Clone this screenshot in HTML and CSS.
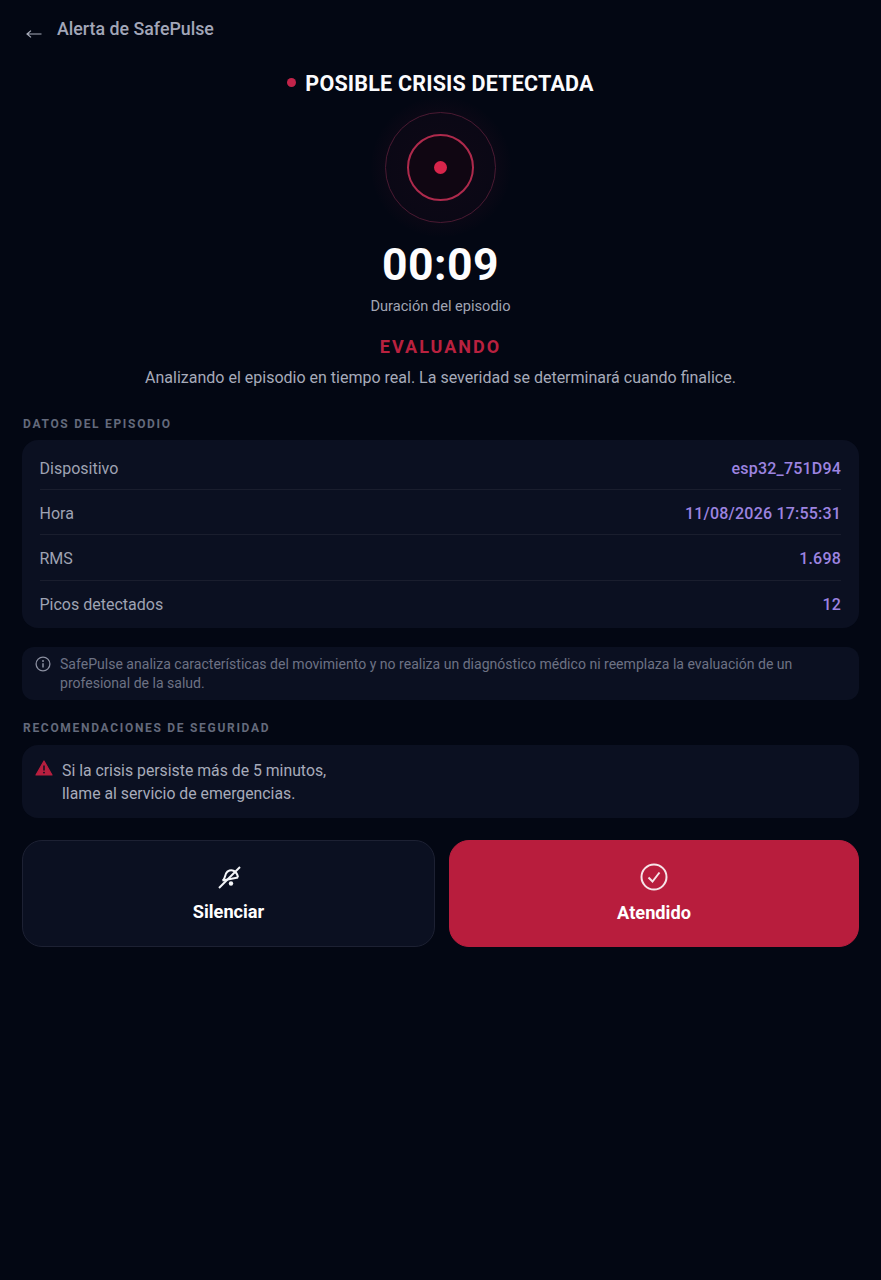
FILE: index.html
```html
<!DOCTYPE html>
<html lang="es">
<head>
<meta charset="utf-8">
<title>Alerta de SafePulse</title>
<link rel="stylesheet" href="styles.css">
</head>
<body>
<main class="page">
  <header class="topbar">
    <svg class="back" viewBox="0 0 16 10" width="16" height="10"><path d="M15.500 5H1M5 1.600 1 5l4 3.400" fill="none" stroke="#a9adbb" stroke-width="1.200"/></svg>
    <span class="topbar-title">Alerta de SafePulse</span>
  </header>
  <section class="hero">
    <h1 class="crisis"><span class="crisis-dot"></span>POSIBLE CRISIS DETECTADA</h1>
    <div class="pulse"><div class="ring-outer"><div class="ring-inner"><div class="core"></div></div></div></div>
    <div class="timer">00:09</div>
    <div class="timer-label">Duración del episodio</div>
    <div class="status">EVALUANDO</div>
    <p class="status-text">Analizando el episodio en tiempo real. La severidad se determinará cuando finalice.</p>
  </section>
  <h2 class="section-label first">DATOS DEL EPISODIO</h2>
  <section class="card data">
    <div class="row"><span>Dispositivo</span><b>esp32_751D94</b></div>
    <div class="row"><span>Hora</span><b>11/08/2026 17:55:31</b></div>
    <div class="row"><span>RMS</span><b>1.698</b></div>
    <div class="row"><span>Picos detectados</span><b>12</b></div>
  </section>
  <section class="notice">
    <svg class="info" viewBox="0 0 16 16" width="16" height="16"><circle cx="8" cy="8" r="6.900" fill="none" stroke="#8b8fa0" stroke-width="1.300"/><path d="M8 7.200v4.200" stroke="#8b8fa0" stroke-width="1.500"/><circle cx="8" cy="4.900" r="1" fill="#8b8fa0"/></svg>
    <p>SafePulse analiza características del movimiento y no realiza un diagnóstico médico ni reemplaza la evaluación de un profesional de la salud.</p>
  </section>
  <h2 class="section-label">RECOMENDACIONES DE SEGURIDAD</h2>
  <section class="card advice">
    <svg class="warn" viewBox="0 0 18 16" width="18" height="16"><path d="M9 1 17 15H1Z" fill="#b81f3f" stroke="#b81f3f" stroke-width="1.200" stroke-linejoin="round"/><path d="M9 5.500v5" stroke="#0d1122" stroke-width="1.500"/><circle cx="9" cy="12.600" r=".9" fill="#0d1122"/></svg>
    <p>Si la crisis persiste más de 5 minutos,<br>llame al servicio de emergencias.</p>
  </section>
  <div class="actions">
    <button class="action mute">
      <svg viewBox="0 0 26 26" width="26" height="26" fill="none" stroke="#f4f5f8" stroke-width="2"><path d="M7 16.500C9 14 9 12 10 9.500 11.500 6.500 15 5.500 18 7 20.500 8.300 21.500 10.500 22 13.500"/><path d="M6.500 16.500 22 13.500"/><path d="M3 24 24 3"/><circle cx="15" cy="19.500" r="2.200" fill="#f4f5f8" stroke="none"/></svg>
      <span>Silenciar</span>
    </button>
    <button class="action done">
      <svg viewBox="0 0 28 28" width="28" height="28" fill="none" stroke="#f6e4e8" stroke-width="2"><circle cx="14" cy="14" r="12.500"/><path d="M8.500 14.500 12.500 18.500 19.500 9.500"/></svg>
      <span>Atendido</span>
    </button>
  </div>
</main>
</body>
</html>
```

FILE: styles.css
```css
* { box-sizing: border-box; }
html, body { margin: 0; height: 100%; }
body {
  background: #030713;
  color: #fff;
  font-family: Roboto, "Liberation Sans", sans-serif;
}
.page { padding: 0 22px; height: 1280px; overflow: hidden; }
.topbar { display: flex; align-items: center; height: 58px; padding: 0 0 2px 4px; }
.back { margin-top: 12px; margin-right: 15px; }
.topbar-title { font-size: 17.800px; font-weight: 500; color: #a2a6b8; }
.hero { display: flex; flex-direction: column; align-items: center; text-align: center; }
.crisis {
  display: flex; align-items: center; margin: 11px 0 0; height: 28px;
  font-size: 21.500px; font-weight: 700; letter-spacing: .2px; color: #fbfbfd;
}
.crisis-dot { width: 9px; height: 9px; border-radius: 50%; background: #c2244a; margin-right: 9px; margin-top: -2px; }
.pulse {
  margin-top: 0; width: 140px; height: 140px; display: flex; align-items: center; justify-content: center;
  border-radius: 50%;
  background: radial-gradient(circle, rgba(150,25,60,.08) 0, rgba(150,25,60,.05) 55%, rgba(150,25,60,0) 72%);
}
.ring-outer {
  width: 111px; height: 111px; border-radius: 50%; border: 1.500px solid #4a1a32;
  display: flex; align-items: center; justify-content: center;
}
.ring-inner {
  width: 67px; height: 67px; border-radius: 50%; border: 2px solid #ae2a4c; background: #100612;
  display: flex; align-items: center; justify-content: center;
}
.core { width: 13px; height: 13px; border-radius: 50%; background: #d8254b; }
.timer { margin-top: 1px; font-size: 44.500px; line-height: 54px; font-weight: 700; letter-spacing: .5px; color: #fdfdfe; }
.timer-label { margin-top: 4px; font-size: 14.600px; line-height: 20px; color: #a1a5b4; }
.status { margin-top: 19px; font-size: 18px; line-height: 24px; font-weight: 700; letter-spacing: 2px; color: #b9213f; }
.status-text { margin: 9px 0 0; font-size: 16px; line-height: 20px; color: #a7abba; }
.section-label {
  margin: 0 0 0 1px; font-size: 12px; line-height: 16px; font-weight: 700; letter-spacing: 1.700px; color: #646a7c;
}
.section-label.first { margin-top: 28px; }
.card { background: #0b1021; border-radius: 16px; }
.data { margin-top: 8px; padding: 5px 18px 2px 17.500px; }
.row {
  display: flex; justify-content: space-between; align-items: center; height: 45.200px; padding-top: 2px;
  border-bottom: 1px solid #1a1e2e; font-size: 16px; color: #9fa3b3;
}
.row:last-child { border-bottom: 0; }
.row b { font-size: 16px; font-weight: 500; color: #9d84e0; letter-spacing: .2px; }
.notice {
  display: flex; gap: 9px; margin-top: 19px; padding: 8px 14px 7px 13px;
  background: #0b1021; border-radius: 12px;
}
.info { flex: none; margin-top: 1px; }
.notice p { margin: 0; font-size: 14.050px; line-height: 19px; color: #6d7284; }
.notice + .section-label { margin-top: 20px; }
.advice { display: flex; gap: 9px; margin-top: 9px; padding: 14px 13px; height: 73px; }
.warn { flex: none; margin-top: 1px; }
.advice p { margin: 0; font-size: 15.800px; line-height: 23px; color: #a7abba; }
.actions { display: grid; grid-template-columns: 413px 410px; gap: 14px; margin-top: 22px; }
.action {
  height: 107px; border-radius: 20px; border: 1px solid #1d2133; background: #0b1021; color: #fff;
  display: flex; flex-direction: column; align-items: center; justify-content: center; gap: 11px;
  font-family: inherit; font-size: 18.200px; font-weight: 700; padding: 0;
}
.action.done { background: #b81d3d; border-color: #b81d3d; }
```
